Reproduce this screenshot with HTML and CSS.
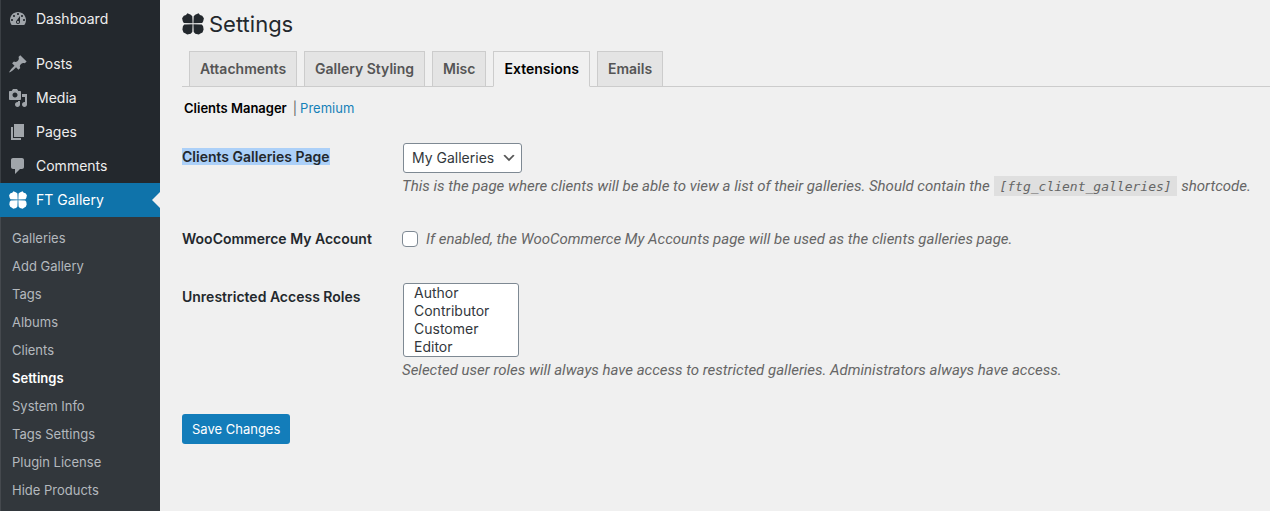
FILE: index.html
```html
<!DOCTYPE html>
<html lang="en">
<head>
  <meta charset="UTF-8" />
  <meta name="viewport" content="width=device-width, initial-scale=1" />
  <title>Settings</title>
  <link rel="stylesheet" href="styles.css">
</head>
<body>
  <svg class="sprite" aria-hidden="true">
    <symbol id="clover" viewBox="0 0 22 22">
      <path d="M10.600 10.300L1.800 10 .8 8.200.1 5.200 1.800 2.800 4 2 5.400.2 8.800 1.800 10.300 3.200z" />
      <path d="M11.400 10.300L11.700 3.200 13.200 1.800 16.600.2 18 2 20.200 2.800 21.900 5.200 21.200 8.200 20.200 10z" />
      <path d="M10.600 11.200L10.300 19 8.700 20.800 5.200 21.600 3.600 20.600 1.500 19.400.4 16.500.9 13.200 2.200 11.500z" />
      <path d="M11.400 11.200L19.800 11.500 21.100 13.200 21.600 16.500 20.500 19.400 18.400 20.600 16.800 21.600 13.300 20.800 11.700 19z" />
    </symbol>
  </svg>

  <div class="layout">
    <nav class="sidebar">
      <ul class="menu">
        <li class="menu-item menu-gap">
          <a href="#">
            <svg class="icon" viewBox="0 0 20 20"><path d="M3.760 16h12.480c1.100-1.370 1.760-3.110 1.760-5 0-4.420-3.580-8-8-8s-8 3.580-8 8c0 1.890.66 3.630 1.760 5zM10 4c.55 0 1 .45 1 1s-.45 1-1 1-1-.45-1-1 .45-1 1-1zM6 6c.55 0 1 .45 1 1s-.45 1-1 1-1-.45-1-1 .45-1 1-1zm8 0c.55 0 1 .45 1 1s-.45 1-1 1-1-.45-1-1 .45-1 1-1zm-5.370 5.550L12 7v6c0 1.100-.9 2-2 2s-2-.9-2-2c0-.57.24-1.080.63-1.450zM4 10c.55 0 1 .45 1 1s-.45 1-1 1-1-.45-1-1 .45-1 1-1zm12 0c.55 0 1 .45 1 1s-.45 1-1 1-1-.45-1-1 .45-1 1-1zm-5 3c0-.55-.45-1-1-1s-1 .45-1 1 .45 1 1 1 1-.45 1-1z" /></svg>
            Dashboard
          </a>
        </li>
        <li class="menu-item">
          <a href="#">
            <svg class="icon" viewBox="0 0 20 20"><path d="M10.440 3.020l1.820-1.820 6.360 6.350-1.830 1.820c-1.050-.68-2.480-.57-3.410.36l-.75.75c-.92.93-1.040 2.350-.35 3.410l-1.830 1.820-2.410-2.410-2.800 2.790c-.42.42-3.380 2.710-3.800 2.290s1.860-3.390 2.280-3.810l2.790-2.790L4.100 9.360l1.830-1.820c1.050.69 2.480.57 3.400-.36l.75-.75c.93-.92 1.050-2.350.36-3.410z" /></svg>
            Posts
          </a>
        </li>
        <li class="menu-item">
          <a href="#">
            <svg class="icon" viewBox="0 0 20 20"><path d="M13 11V4c0-.55-.45-1-1-1h-1.670L9 1H5L3.670 3H2c-.55 0-1 .45-1 1v7c0 .55.45 1 1 1h10c.55 0 1-.45 1-1zM7 4.500c1.380 0 2.500 1.120 2.500 2.500S8.380 9.500 7 9.500 4.500 8.380 4.500 7 5.620 4.500 7 4.500zM14 6h5v10.500c0 1.380-1.120 2.500-2.500 2.500S14 17.880 14 16.500s1.120-2.500 2.500-2.500c.17 0 .34.02.5.05V9h-3V6zm-4 8.050V13h2v3.500c0 1.380-1.120 2.500-2.500 2.500S7 17.880 7 16.500 8.120 14 9.500 14c.17 0 .34.02.5.05z" /></svg>
            Media
          </a>
        </li>
        <li class="menu-item">
          <a href="#">
            <svg class="icon" viewBox="0 0 20 20"><path d="M6 15V2h10v13H6zm-1 1h8v2H3V5h2v11z" /></svg>
            Pages
          </a>
        </li>
        <li class="menu-item">
          <a href="#">
            <svg class="icon" viewBox="0 0 20 20"><path d="M5 2h9c1.100 0 2 .9 2 2v7c0 1.100-.9 2-2 2h-2l-5 5v-5H5c-1.100 0-2-.9-2-2V4c0-1.100.9-2 2-2z" /></svg>
            Comments
          </a>
        </li>
        <li class="menu-item current">
          <a href="#">
            <svg class="icon"><use href="#clover" /></svg>
            FT Gallery
          </a>
        </li>
      </ul>
      <ul class="submenu">
        <li><a href="#">Galleries</a></li>
        <li><a href="#">Add Gallery</a></li>
        <li><a href="#">Tags</a></li>
        <li><a href="#">Albums</a></li>
        <li><a href="#">Clients</a></li>
        <li><a href="#" class="active">Settings</a></li>
        <li><a href="#">System Info</a></li>
        <li><a href="#">Tags Settings</a></li>
        <li><a href="#">Plugin License</a></li>
        <li><a href="#">Hide Products</a></li>
      </ul>
    </nav>

    <main class="content">
      <h1><svg class="title-icon"><use href="#clover" /></svg>Settings</h1>

      <div class="tabs">
        <a href="#" class="tab">Attachments</a>
        <a href="#" class="tab">Gallery Styling</a>
        <a href="#" class="tab">Misc</a>
        <a href="#" class="tab tab-active">Extensions</a>
        <a href="#" class="tab">Emails</a>
      </div>

      <div class="sections">
        <a href="#" class="section-active">Clients Manager</a>
        <span>|</span>
        <a href="#">Premium</a>
      </div>

      <form>
        <div class="row row-page">
          <label class="row-label" for="galleries-page"><mark>Clients Galleries Page</mark></label>
          <div class="field">
            <div class="select-wrap">
              <select id="galleries-page" class="select">
                <option>My Galleries</option>
              </select>
              <svg class="chevron" viewBox="0 0 20 20"><path d="M5 6l5 5 5-5 2 1-7 7-7-7 2-1z" /></svg>
            </div>
            <p class="description">This is the page where clients will be able to view a list of their galleries. Should contain the <code>[ftg_client_galleries]</code> shortcode.</p>
          </div>
        </div>

        <div class="row row-account">
          <label class="row-label" for="my-account">WooCommerce My Account</label>
          <div class="field check-field">
            <input type="checkbox" id="my-account" class="checkbox">
            <label class="description" for="my-account">If enabled, the WooCommerce My Accounts page will be used as the clients galleries page.</label>
          </div>
        </div>

        <div class="row row-roles">
          <label class="row-label" for="roles">Unrestricted Access Roles</label>
          <div class="field">
            <select id="roles" class="roles" multiple size="4">
              <option>Author</option>
              <option>Contributor</option>
              <option>Customer</option>
              <option>Editor</option>
            </select>
            <p class="description">Selected user roles will always have access to restricted galleries. Administrators always have access.</p>
          </div>
        </div>

        <button type="submit" class="save">Save Changes</button>
      </form>
    </main>
  </div>
</body>
</html>
```
FILE: styles.css
```css
* {
  box-sizing: border-box;
}

body {
  margin: 0;
  background: #f0f0f0;
  color: #23282d;
  font-family: Inter, "Liberation Sans", sans-serif;
  font-size: 14px;
  line-height: 18px;
}

a {
  color: #0073aa;
  text-decoration: none;
}

ul {
  list-style: none;
  margin: 0;
  padding: 0;
}

.sprite {
  display: none;
}

.layout {
  display: flex;
  min-height: 100vh;
}

/* Sidebar */
.sidebar {
  display: flex;
  flex-direction: column;
  flex: 0 0 160px;
  background: #23282d;
  box-shadow: inset 1px 0 #3a3f44;
}

.menu {
  padding-top: 2px;
}

.menu-item a {
  display: flex;
  align-items: center;
  gap: 8px;
  height: 34px;
  padding-left: 8px;
  color: #eee;
}

.menu-gap {
  margin-bottom: 11px;
}

.icon {
  width: 20px;
  height: 20px;
  fill: #a0a5aa;
}

.current {
  position: relative;
  background: #0f73aa;
}

.current a {
  color: #fff;
}

.current .icon {
  width: 18px;
  margin: 0 1px;
  fill: #fff;
}

.current::after {
  content: "";
  position: absolute;
  top: 9px;
  right: 0;
  border: 8px solid transparent;
  border-left: 0;
  border-right-color: #f0f0f0;
}

.submenu {
  flex: 1;
  padding: 7px 0;
  background: #32373c;
  box-shadow: inset 1px 0 #45494e;
  font-size: 13px;
}

.submenu a {
  display: block;
  padding: 5px 12px;
  color: #b4b9be;
}

.submenu .active {
  color: #fff;
  font-weight: 600;
}

/* Content */
.content {
  flex: 1;
  min-width: 0;
  padding-left: 22px;
}

h1 {
  display: flex;
  align-items: center;
  gap: 5px;
  margin: 0;
  padding: 9px 0 12px;
  font-size: 22px;
  font-weight: 400;
  line-height: 30px;
}

.title-icon {
  width: 22px;
  height: 22px;
  fill: #23282d;
}

.tabs {
  display: flex;
  gap: 7px;
  padding-left: 7px;
  border-bottom: 1px solid #ccc;
}

.tab {
  margin-bottom: -1px;
  padding: 8px 10px;
  border: 1px solid #ccc;
  background: #e4e4e4;
  color: #555;
  font-weight: 600;
  line-height: 18px;
}

.tab-active {
  border-bottom-color: #f0f0f0;
  background: #f0f0f0;
  color: #000;
}

.sections {
  display: flex;
  gap: 3px;
  padding: 12px 2px 0;
  color: #666;
  font-size: 13px;
}

.sections a {
  color: #1580b8;
}

.sections .section-active {
  margin-right: 3px;
  color: #000;
  font-weight: 600;
}

.row {
  display: flex;
}

.row-page {
  padding-top: 26px;
}

.row-account {
  padding-top: 34px;
}

.row-roles {
  padding-top: 35px;
}

.row-label {
  flex: 0 0 220px;
  font-weight: 600;
}

.row-page .row-label,
.row-roles .row-label {
  padding-top: 5px;
}

mark {
  background: #acd0f8;
  color: inherit;
}

.field {
  flex: 1;
  min-width: 0;
}

.check-field {
  display: flex;
  align-items: center;
  gap: 8px;
}

.select-wrap {
  position: relative;
  width: fit-content;
  margin-left: 1px;
}

.select {
  display: block;
  height: 30px;
  padding: 0 26px 0 8px;
  border: 1px solid #7e8993;
  border-radius: 3px;
  background: #fff;
  color: #32373c;
  font: inherit;
  appearance: none;
}

.chevron {
  position: absolute;
  top: 7px;
  right: 5px;
  width: 16px;
  height: 16px;
  fill: #555;
  pointer-events: none;
}

.description {
  margin: 0;
  color: #666;
  font-family: Roboto, "Liberation Sans", sans-serif;
  font-size: 15px;
  font-style: italic;
}

p.description {
  padding-top: 4px;
}

code {
  margin: 0 1px;
  padding: 3px 5px 2px;
  background: #dfdfdf;
  font-family: "DejaVu Sans Mono", monospace;
  font-size: 13px;
}

.checkbox {
  width: 16px;
  height: 16px;
  margin: 0;
  border: 1px solid #7e8993;
  border-radius: 4px;
  background: #fff;
  appearance: none;
}

.roles {
  display: block;
  width: 116px;
  height: 74px;
  margin-left: 1px;
  padding: 0 8px;
  border: 1px solid #7e8993;
  border-radius: 3px;
  background: #fff;
  color: #32373c;
  font: inherit;
  overflow: hidden;
}

.roles option {
  min-height: 18px;
  padding: 0 2px;
}

.save {
  height: 30px;
  margin-top: 35px;
  padding: 0 10px;
  border: 0;
  border-radius: 3px;
  background: #137dba;
  color: #fff;
  font-family: inherit;
  font-size: 13px;
}
```
